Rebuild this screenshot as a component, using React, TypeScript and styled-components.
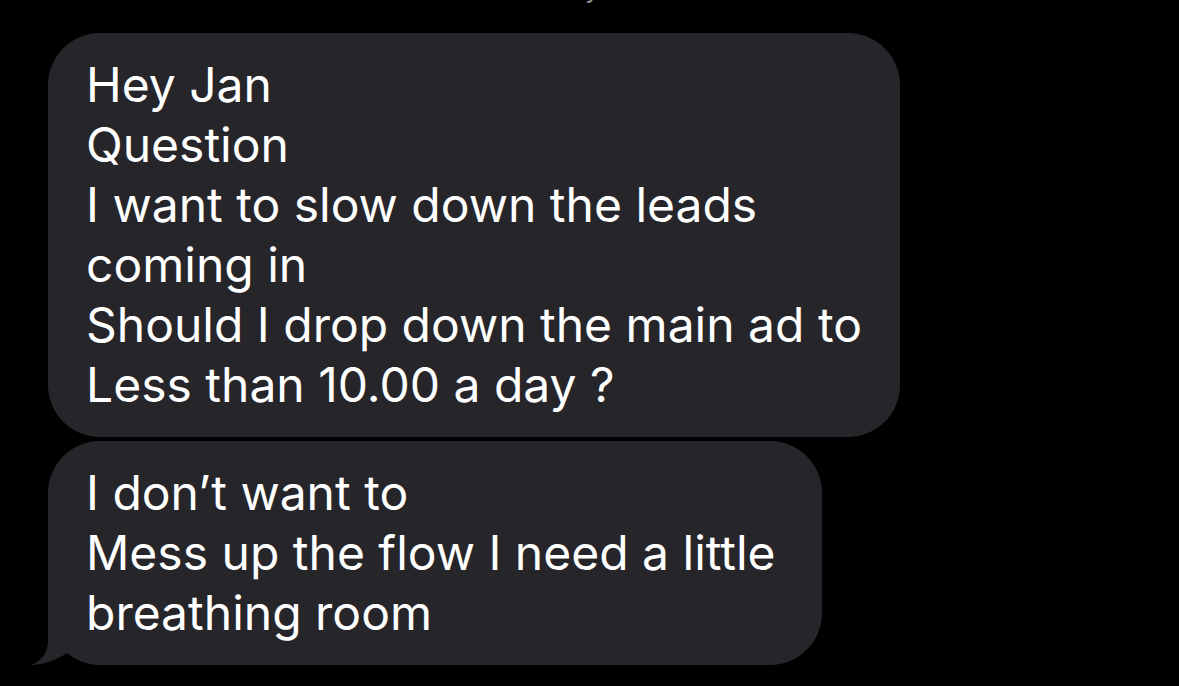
import React from 'react';
import styled, { createGlobalStyle } from 'styled-components';

const GlobalStyle = createGlobalStyle`
  html, body {
    margin: 0;
    padding: 0;
    background: #000;
  }
  body {
    width: 1179px;
    height: 686px;
    overflow: hidden;
    font-family: Inter, "Noto Sans", "Liberation Sans", sans-serif;
  }
`;

const bubbleColor = '#26252a';

const messages: { lines: string[]; width: number; tail?: boolean }[] = [
  {
    width: 852,
    lines: [
      'Hey Jan',
      'Question',
      'I want to slow down the leads',
      'coming in',
      'Should I drop down the main ad to',
      'Less than 10.00 a day ?',
    ],
  },
  {
    width: 774,
    tail: true,
    lines: ['I don\u2019t want to', 'Mess up the flow I need a little', 'breathing room'],
  },
];

const Screen = styled.div`
  width: 1179px;
  height: 686px;
  background: #000;
  overflow: hidden;
  display: flex;
  flex-direction: column;
  padding-left: 48px;
  box-sizing: border-box;
`;

const Timestamp = styled.div`
  height: 57px;
  margin-top: -24px;
  padding-left: 537px;
  color: #8e8e93;
  font-size: 26px;
  line-height: 26px;
`;

const Thread = styled.div`
  display: flex;
  flex-direction: column;
  align-items: flex-start;
  gap: 4px;
`;

const Bubble = styled.div<{ $width: number }>`
  position: relative;
  width: ${(p) => p.$width}px;
  box-sizing: border-box;
  background: ${bubbleColor};
  border-radius: 52px;
  padding: 22px 36px 22px 38px;
  color: #fff;
  font-size: 48px;
  line-height: 60px;
`;

const Line = styled.div`
  white-space: nowrap;
`;

const Tail = styled.svg`
  position: absolute;
  left: -17px;
  bottom: 0;
  width: 36px;
  height: 55px;
`;

export default function App() {
  return (
    <>
      <GlobalStyle />
      <Screen>
        <Timestamp>y</Timestamp>
        <Thread>
          {messages.map((m, i) => (
            <Bubble key={i} $width={m.width}>
              {m.tail && (
                <Tail viewBox="0 0 36 55">
                  <path
                    d="M17 0 L17 30 C17 42 12 50 0 55 C12 55 26 50 36 43 L36 0 Z"
                    fill={bubbleColor}
                  />
                </Tail>
              )}
              {m.lines.map((l, j) => (
                <Line key={j}>{l}</Line>
              ))}
            </Bubble>
          ))}
        </Thread>
      </Screen>
    </>
  );
}
